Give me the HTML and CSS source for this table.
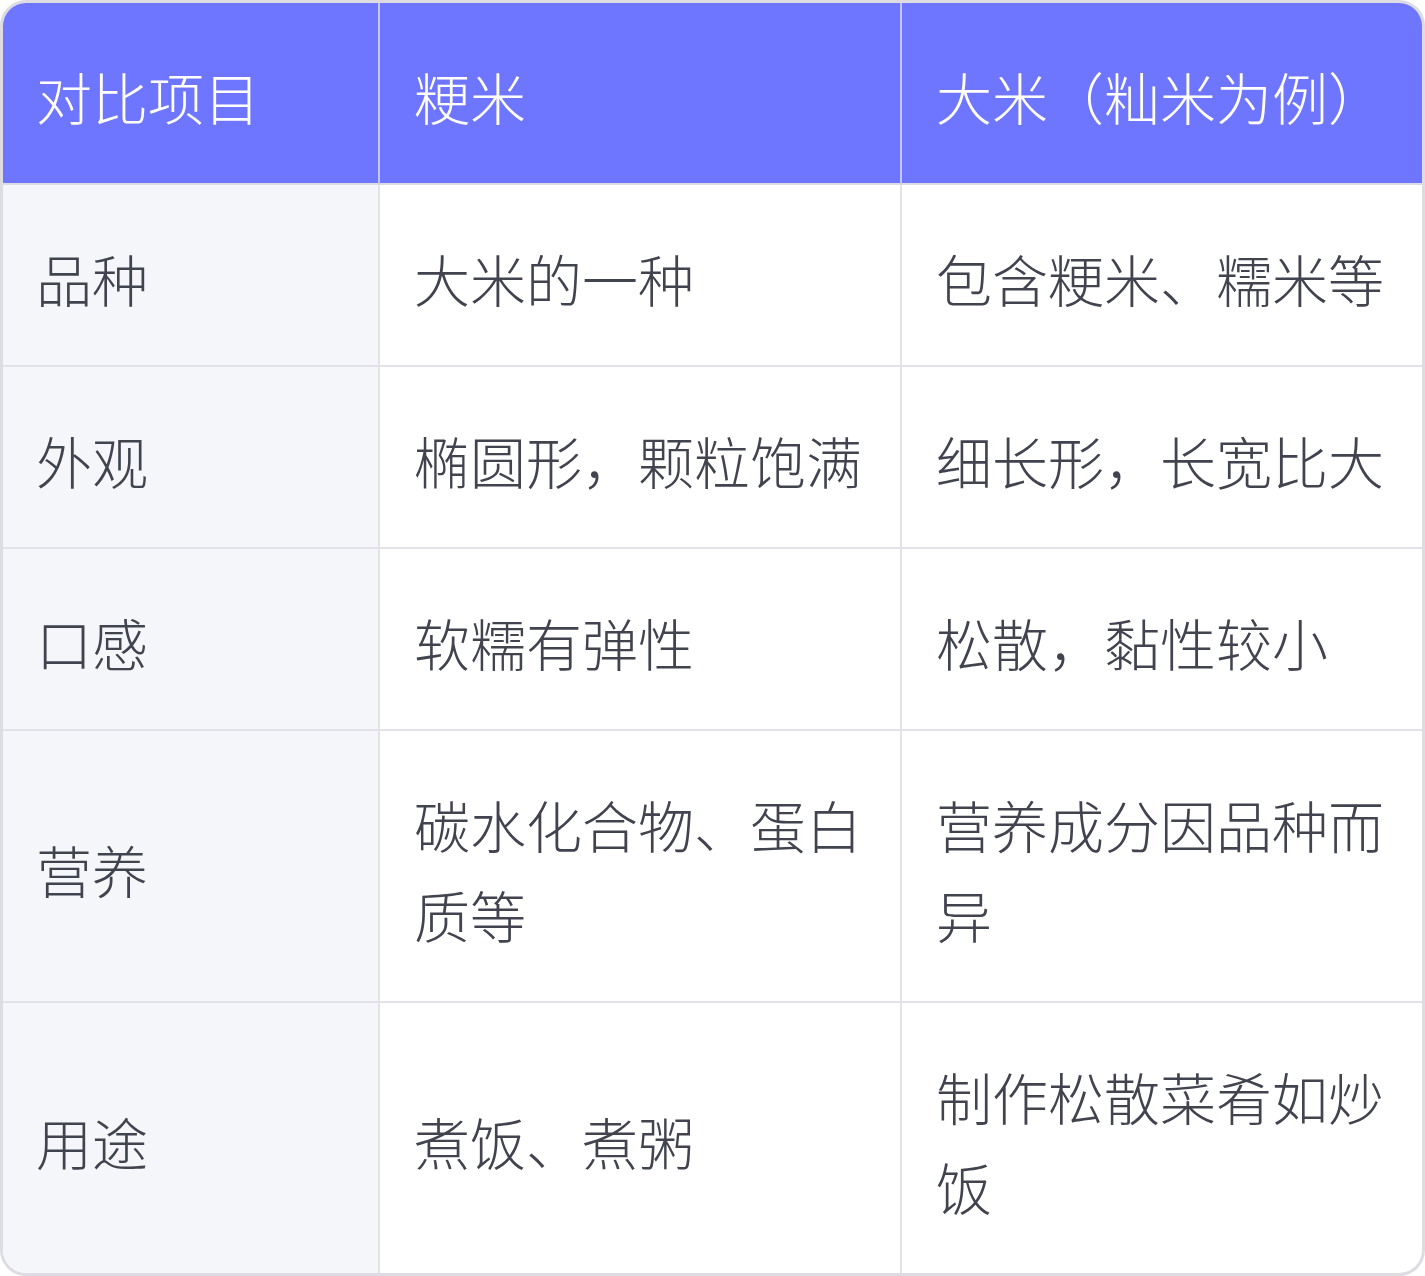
FILE: index.html
```html
<!DOCTYPE html>
<html lang="zh-CN">
<head>
<meta charset="utf-8">
<link rel="stylesheet" href="styles.css">
</head>
<body>
<div class="wrap">
  <table class="cmp">
    <colgroup>
      <col class="c1">
      <col class="c2">
      <col class="c3">
    </colgroup>
    <thead>
      <tr>
        <th>对比项目</th>
        <th>粳米</th>
        <th>大米（籼米为例）</th>
      </tr>
    </thead>
    <tbody>
      <tr><td>品种</td><td>大米的一种</td><td>包含粳米、糯米等</td></tr>
      <tr><td>外观</td><td>椭圆形，颗粒饱满</td><td>细长形，长宽比大</td></tr>
      <tr><td>口感</td><td>软糯有弹性</td><td>松散，黏性较小</td></tr>
      <tr><td>营养</td><td>碳水化合物、蛋白质等</td><td>营养成分因品种而异</td></tr>
      <tr><td>用途</td><td>煮饭、煮粥</td><td>制作松散菜肴如炒饭</td></tr>
    </tbody>
  </table>
</div>
</body>
</html>
```
FILE: styles.css
```css
html, body {
  margin: 0;
  padding: 0;
  background: #ffffff;
}
.wrap {
  width: 1425px;
  height: 1276px;
  box-sizing: border-box;
  border: 3px solid #dcdce2;
  border-radius: 26px;
  overflow: hidden;
  background: #ffffff;
}
.cmp {
  width: 100%;
  border-collapse: separate;
  border-spacing: 0;
  table-layout: fixed;
  font-family: "Noto Sans CJK SC", "Noto Sans", sans-serif;
  font-size: 56px;
  line-height: 90px;
  color: #41444f;
}
.c1 { width: 377px; }
.c2 { width: 522px; }
.c3 { width: auto; }
.cmp th, .cmp td {
  text-align: left;
  vertical-align: middle;
  padding: 48px 34px 42px 34px;
  border-bottom: 2px solid #e2e2e8;
  border-right: 2px solid #e2e2e8;
  font-weight: 300;
}
.cmp th:first-child, .cmp td:first-child {
  padding-left: 33px;
}
.cmp th:last-child, .cmp td:last-child {
  border-right: none;
}
.cmp tbody tr:last-child td {
  border-bottom: none;
}
.cmp th {
  background: #6e75ff;
  color: #ffffff;
  border-right-color: #c3c6ff;
  border-bottom-color: #dcdce4;
}
.cmp td:first-child {
  background: #f5f6fa;
}
```
